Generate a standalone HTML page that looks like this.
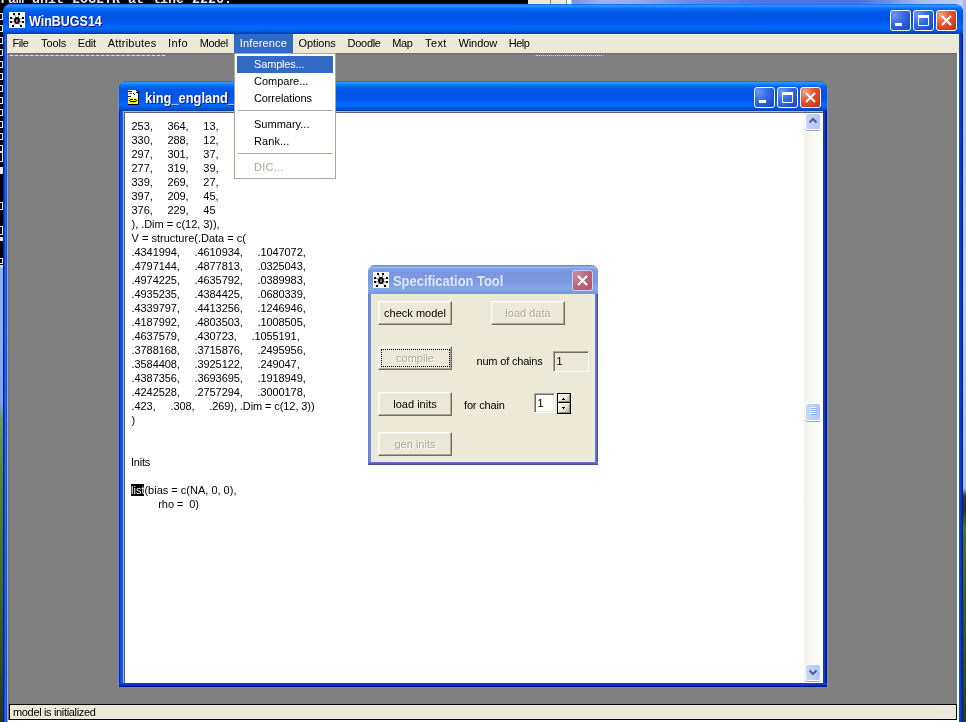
<!DOCTYPE html>
<html lang="en">
<head>
<meta charset="utf-8">
<title>WinBUGS14</title>
<style>
html,body{margin:0;padding:0;}
body{width:966px;height:722px;overflow:hidden;position:relative;background:#808080;font-family:"Liberation Sans",sans-serif;font-size:11px;line-height:14px;color:#000;}
.a{position:absolute;}
.t{position:absolute;white-space:pre;}
#wl{left:0;top:0;width:3px;height:722px;background:linear-gradient(to bottom,#000 0,#000 265px,#d8d4c8 265px,#d8d4c8 268px,#8bb4f0 268px,#8bb4f0 330px,#7aa6ec 400px,#6d9a58 420px,#5a8a2a 470px,#3f6a1c 600px,#22380e 722px);}
#wr{left:963px;top:0;width:3px;height:722px;background:linear-gradient(to bottom,#a8b8e8 0,#b8d0ff 300px,#aabfee 488px,#343c2c 496px,#2a3420 510px,#4a7820 528px,#3c6018 600px,#2a4010 722px);}
#wt{left:0;top:0;width:966px;height:12px;background:linear-gradient(to right,#000 0,#000 528px,#ece9d8 528px,#ece9d8 550px,#8a8878 550px,#8a8878 551px,#ece9d8 551px,#ece9d8 566px,#8a8878 566px,#8a8878 567px,#fff 567px,#fff 571px,#7890e8 572px,#a0b0f0 600px,#98a8ec 640px,#6c88e4 690px,#5078e0 760px,#4a74e0 860px,#7090e4 890px,#a8bcf0 920px,#c0d0f4 966px);}
#ct{left:0;top:-6px;font-family:"Liberation Mono",monospace;font-size:13.33px;line-height:12px;color:#e8e8e8;height:12px;overflow:hidden;font-weight:bold;}
.lm{left:0;width:3px;height:7px;border:1px solid #e8e8e8;border-left:none;box-sizing:border-box;}
/* XP frames */
.fr{border-radius:8px 8px 0 0;overflow:hidden;}
.tba{left:0;top:0;right:0;height:30px;background:linear-gradient(to bottom,#0058ee 0%,#3593ff 4%,#288eff 8%,#127dff 12%,#036ffc 16%,#0262ee 22%,#0057e5 30%,#0054e3 40%,#0055eb 56%,#005bf5 66%,#026afe 76%,#0062ef 86%,#0052d6 92%,#0046c4 97%,#0038a8 100%);}
.tbi{left:0;top:0;right:0;height:29px;background:linear-gradient(to bottom,#6b7fd8 0%,#7e9ee3 4%,#94afe8 6%,#97b4e9 8%,#82a5e4 14%,#7c9fe2 17%,#7996de 25%,#7b99e1 56%,#82a9e9 81%,#80a5e7 89%,#7b96e1 94%,#7a93df 97%,#8a9fe0 100%);}
.ttl{color:#fff;font-weight:bold;font-size:14px;line-height:16px;text-shadow:1px 1px 0 #0a1883;transform-origin:0 0;}
.cb{width:21px;height:21px;box-sizing:border-box;border:1px solid #fff;border-radius:3px;background:radial-gradient(circle at 20% 20%,#6c98f8 0,#3a6cea 40%,#2452d0 75%,#1d47c4 100%);}
.cb.x{background:radial-gradient(circle at 20% 20%,#f0a888 0,#e2592f 40%,#cc3c1c 80%,#b83016 100%);}
.cb.xi{border-color:#ccd2f4;background:radial-gradient(circle at 20% 20%,#cc8c9c 0,#bc647c 50%,#aa546c 100%);}
.cb svg{position:absolute;left:-1px;top:-1px;}
/* menubar */
#mb{left:7px;top:34px;width:952px;height:19px;background:#ece9d8;box-shadow:inset 0 1px 0 #f6f5ee;}
.mi{top:37px;line-height:13px;font-size:11px;}
/* dropdown */
#dd{left:234px;top:53px;width:102px;height:126px;box-sizing:border-box;border:1px solid #aca899;background:#fff;}
.di{left:254px;line-height:13px;font-size:11px;}
/* status */
#sb{left:9px;top:704px;width:948px;height:16px;box-sizing:border-box;border:1px solid #000;background:#ece9d8;}
/* doc */
.doc{left:131.6px;line-height:14px;font-size:11px;}
/* buttons */
.btn{box-sizing:border-box;width:74px;height:24px;background:#ece9d8;border:1px solid;border-color:#fff #716f64 #716f64 #fff;box-shadow:inset -1px -1px 0 #aca899,inset 1px 1px 0 #f4f2e8;text-align:center;line-height:23px;font-size:11px;white-space:pre;}
.dis{color:#aca899;text-shadow:1px 1px 0 #fff;}
.sunk{box-sizing:border-box;border:1px solid;border-color:#aca899 #fff #fff #aca899;box-shadow:inset 1px 1px 0 #716f64,inset -1px -1px 0 #ece9d8;}
</style>
</head>
<body>
<div id="root" class="a" style="left:0;top:0;width:966px;height:722px;will-change:transform">
<div id="wt" class="a"></div><div id="wl" class="a"></div><div id="wr" class="a"></div>
<div id="ct" class="t">ram unit LOGLTR at line 2226:</div>
<div class="a lm" style="top:13px"></div>
<div class="a lm" style="top:25px"></div>
<div class="a lm" style="top:37px"></div>
<div class="a lm" style="top:49px"></div>
<div class="a lm" style="top:61px"></div>
<div class="a lm" style="top:73px"></div>
<div class="a lm" style="top:85px"></div>
<div class="a lm" style="top:97px"></div>
<div class="a lm" style="top:109px"></div>
<div class="a lm" style="top:121px"></div>
<div class="a lm" style="top:133px"></div>
<div class="a lm" style="top:145px"></div>
<div class="a lm" style="top:152px;height:10px;"></div>
<div class="a lm" style="top:167px;height:7px;background:#e8e8e8;"></div>
<div class="a lm" style="top:202px;height:8px;"></div>
<div class="a lm" style="top:226px;height:9px;"></div>
<div class="a lm" style="top:237px;height:4px;background:#e8e8e8;"></div>
<div class="a lm" style="top:258px;height:6px;"></div>
<div class="a fr" style="left:3px;top:4px;width:960px;height:730px;background:linear-gradient(to right,#001ac8 0,#001ac8 1px,#0842e0 1px,#0842e0 2px,#2868f0 2px,#2868f0 3px,#2050b8 3px,#2050b8 4px,#90a8d8 4px,#90a8d8 5px,#6e7480 5px,#6e7480 6px,#808080 6px,#808080 954px,#f4ffff 954px,#f4ffff 956px,#1848c8 956px,#1848c8 957px,#0c3cd0 957px,#0c3cd0 958px,#0630c0 958px,#0630c0 959px,#001c98 959px)"><div class="a tba"></div></div>
<svg class="a" style="left:9px;top:12px" width="16" height="16" viewBox="0 0 16 16"><rect width="16" height="16" fill="#fff"/><path d="M5.5 3L7 6M10 3L9 6M3 6.3L6 7.5M3 10L6 9.3M13 6.3L10 7.5M13 10L10 9.3M4.5 13L6.5 11M11.5 13L9.5 11" fill="none" stroke="#333" stroke-width=".8" opacity=".75"/><g fill="#000" shape-rendering="crispEdges"><rect x="4" y="1" width="2" height="2"/><rect x="9" y="1" width="2" height="2"/><rect x="1" y="5" width="2" height="2"/><rect x="1" y="9" width="2" height="2"/><rect x="13" y="5" width="2" height="2"/><rect x="13" y="9" width="2" height="2"/><rect x="3" y="13" width="2" height="2"/><rect x="11" y="13" width="2" height="2"/></g><ellipse cx="8" cy="8.6" rx="2.9" ry="3.5" fill="#000"/><rect x="7.2" y="7.2" width="1.7" height="3.2" fill="#8a8a8a"/></svg>
<div class="t ttl" style="left:28.5px;top:13px;transform:scaleX(0.8926)" id="t_main">WinBUGS14</div>
<div class="a cb" style="left:890px;top:10px"><svg width="21" height="21" viewBox="0 0 21 21"><rect x="5" y="13" width="7" height="3" fill="#fff"/></svg></div><div class="a cb" style="left:913px;top:10px"><svg width="21" height="21" viewBox="0 0 21 21"><path d="M5.5 6.5h10v9h-10z M5.5 5.5h10" fill="none" stroke="#fff" stroke-width="1"/><rect x="5" y="5" width="11" height="3" fill="#fff"/></svg></div><div class="a cb x" style="left:936px;top:10px"><svg width="21" height="21" viewBox="0 0 21 21"><path d="M6 6L15 15M15 6L6 15" stroke="#fff" stroke-width="2.2" fill="none"/></svg></div>
<div id="mb" class="a"></div>
<div class="a" style="left:234px;top:34px;width:59px;height:19px;background:#316ac5"></div>
<div class="t mi" id="m_File" style="left:12.4px;letter-spacing:-0.378px;">File</div>
<div class="t mi" id="m_Tools" style="left:41.1px;letter-spacing:-0.147px;">Tools</div>
<div class="t mi" id="m_Edit" style="left:77.8px;letter-spacing:-0.256px;">Edit</div>
<div class="t mi" id="m_Attributes" style="left:107.7px;letter-spacing:0.226px;">Attributes</div>
<div class="t mi" id="m_Info" style="left:167.9px;letter-spacing:0.447px;">Info</div>
<div class="t mi" id="m_Model" style="left:199.7px;letter-spacing:-0.342px;">Model</div>
<div class="t mi" id="m_Inference" style="left:239.7px;color:#fff;letter-spacing:0.153px;">Inference</div>
<div class="t mi" id="m_Options" style="left:298.6px;letter-spacing:-0.120px;">Options</div>
<div class="t mi" id="m_Doodle" style="left:347.6px;letter-spacing:-0.292px;">Doodle</div>
<div class="t mi" id="m_Map" style="left:392.3px;letter-spacing:-0.353px;">Map</div>
<div class="t mi" id="m_Text" style="left:425.0px;letter-spacing:0.404px;">Text</div>
<div class="t mi" id="m_Window" style="left:458.5px;letter-spacing:-0.105px;">Window</div>
<div class="t mi" id="m_Help" style="left:508.7px;letter-spacing:-0.475px;">Help</div>
<div class="a" style="left:8px;top:53px;width:949px;height:1px;background:#6c6e74"></div>
<div class="a" style="left:9px;top:54px;width:948px;height:1px;background:#7a7a7c"></div>
<div class="a" style="left:9px;top:55px;width:157px;height:1px;background:#9696b0"></div><div class="a" style="left:10px;top:55px;width:155px;height:0;border-top:1px dashed #e4e4f0"></div>
<div class="a" style="left:534px;top:55px;width:70px;height:1px;background:#8c8ca4"></div><div class="a" style="left:536px;top:55px;width:66px;height:0;border-top:1px dotted #d0d0e0"></div>
<div class="a" style="left:118px;top:88px;width:1px;height:599px;background:#8088c0"></div>
<div class="a fr" style="left:119px;top:81px;width:708px;height:606px;background:linear-gradient(to right,#0020c0 0,#0020c0 1px,#1050e0 1px,#1050e0 3px,#2060e0 3px,#2060e0 4px,#0c3cc8 4px,#0c3cc8 704px,#1038c0 704px,#1038c0 706px,#0428b0 706px,#001680 708px)"><div class="a tba"></div></div>
<div class="a" style="left:119px;top:683px;width:708px;height:4px;background:linear-gradient(to bottom,#0c40d8 0,#0c40d8 1px,#0a38c8 1px,#0a38c8 2px,#0428b0 2px,#0428b0 3px,#001680 3px)"></div>
<div class="a" style="left:827px;top:88px;width:1px;height:599px;background:#8088b8"></div>
<div class="a" style="left:123px;top:111px;width:700px;height:572px;background:#fff;box-sizing:border-box;border-left:1px solid #90b0f0;border-top:1px solid #a0bcf0;box-shadow:inset 1px 1px 0 #5a6478"></div>
<div class="a" style="left:804px;top:113px;width:17px;height:569px;background:linear-gradient(to right,#f3f1ec 0,#f8f7f3 40%,#fefefd 100%)"></div>
<div class="a" style="left:805px;top:113px;width:16px;height:17px;box-sizing:border-box;border:1px solid #fff;border-radius:3px;background:linear-gradient(to right,#c9d7fc,#bccdfa 60%,#b0c4f6);box-shadow:0 1px 0 #9aa8c8"><svg class="a" style="left:-1px;top:-1px" width="16" height="17" viewBox="0 0 16 17"><path d="M4.5 9.5L8 6L11.5 9.5" fill="none" stroke="#4d6185" stroke-width="2"/></svg></div><div class="a" style="left:805px;top:403px;width:16px;height:18px;box-sizing:border-box;border:1px solid #fff;border-radius:3px;background:linear-gradient(to right,#c9d7fc,#bccdfa 60%,#b0c4f6);box-shadow:0 1px 0 #9aa8c8"><svg class="a" style="left:-1px;top:-1px" width="16" height="18" viewBox="0 0 16 18"><g stroke="#eef4fe" stroke-width="1"><path d="M5 4.5h6M5 6.5h6M5 8.5h6M5 10.5h6"/></g><g stroke="#8cb0f8" stroke-width="1"><path d="M6 5.5h6M6 7.5h6M6 9.5h6M6 11.5h6"/></g></svg></div><div class="a" style="left:805px;top:664px;width:16px;height:17px;box-sizing:border-box;border:1px solid #fff;border-radius:3px;background:linear-gradient(to right,#c9d7fc,#bccdfa 60%,#b0c4f6);box-shadow:0 1px 0 #9aa8c8"><svg class="a" style="left:-1px;top:-1px" width="16" height="17" viewBox="0 0 16 17"><path d="M4.5 6.5L8 10L11.5 6.5" fill="none" stroke="#4d6185" stroke-width="2"/></svg></div>
<svg class="a" style="left:127px;top:89px" width="13" height="17" viewBox="0 0 13 17" shape-rendering="crispEdges"><path d="M1 1h8l3 3v12h-11z" fill="#000"/><path d="M1 1h8v3h2v5h-10z" fill="#fff"/><rect x="1" y="9" width="10" height="6" fill="#f4f040"/><rect x="1" y="2" width="4" height="1" fill="#000"/><rect x="2" y="4" width="3" height="1" fill="#e04040"/><rect x="1" y="7" width="3" height="1" fill="#000"/><rect x="6" y="4" width="1" height="1" fill="#000"/><rect x="7" y="5" width="1" height="1" fill="#000"/><rect x="9" y="2" width="1" height="1" fill="#fff"/><path d="M3 10h3v1h-3zM7 10h2v1h-2zM2 11h1v1h-1zM9 11h1v1h-1zM3 12h6v1h-6z" fill="#000"/></svg>
<div class="t ttl" style="left:144.8px;top:90px;transform:scaleX(0.9180)" id="t_child">king_england_</div>
<div class="a cb" style="left:754px;top:87px"><svg width="21" height="21" viewBox="0 0 21 21"><rect x="5" y="13" width="7" height="3" fill="#fff"/></svg></div><div class="a cb" style="left:777px;top:87px"><svg width="21" height="21" viewBox="0 0 21 21"><path d="M5.5 6.5h10v9h-10z M5.5 5.5h10" fill="none" stroke="#fff" stroke-width="1"/><rect x="5" y="5" width="11" height="3" fill="#fff"/></svg></div><div class="a cb x" style="left:800px;top:87px"><svg width="21" height="21" viewBox="0 0 21 21"><path d="M6 6L15 15M15 6L6 15" stroke="#fff" stroke-width="2.2" fill="none"/></svg></div>
<div class="t doc" id="d0" style="top:119px;letter-spacing:-0.090px;">253,     364,     13,</div>
<div class="t doc" id="d1" style="top:133px;letter-spacing:-0.090px;">330,     288,     12,</div>
<div class="t doc" id="d2" style="top:147px;letter-spacing:-0.090px;">297,     301,     37,</div>
<div class="t doc" id="d3" style="top:161px;letter-spacing:-0.090px;">277,     319,     39,</div>
<div class="t doc" id="d4" style="top:175px;letter-spacing:-0.090px;">339,     269,     27,</div>
<div class="t doc" id="d5" style="top:189px;letter-spacing:-0.090px;">397,     209,     45,</div>
<div class="t doc" id="d6" style="top:203px;letter-spacing:-0.090px;">376,     229,     45</div>
<div class="t doc" id="d7" style="top:217px;letter-spacing:-0.050px;">), .Dim = c(12, 3)),</div>
<div class="t doc" id="d8" style="top:231px;letter-spacing:0.000px;">V = structure(.Data = c(</div>
<div class="t doc" id="d9" style="top:245px;letter-spacing:-0.090px;">.4341994,     .4610934,     .1047072,</div>
<div class="t doc" id="d10" style="top:259px;letter-spacing:-0.090px;">.4797144,     .4877813,     .0325043,</div>
<div class="t doc" id="d11" style="top:273px;letter-spacing:-0.090px;">.4974225,     .4635792,     .0389983,</div>
<div class="t doc" id="d12" style="top:287px;letter-spacing:-0.090px;">.4935235,     .4384425,     .0680339,</div>
<div class="t doc" id="d13" style="top:301px;letter-spacing:-0.090px;">.4339797,     .4413256,     .1246946,</div>
<div class="t doc" id="d14" style="top:315px;letter-spacing:-0.090px;">.4187992,     .4803503,     .1008505,</div>
<div class="t doc" id="d15" style="top:329px;letter-spacing:-0.090px;">.4637579,     .430723,     .1055191,</div>
<div class="t doc" id="d16" style="top:343px;letter-spacing:-0.090px;">.3788168,     .3715876,     .2495956,</div>
<div class="t doc" id="d17" style="top:357px;letter-spacing:-0.090px;">.3584408,     .3925122,     .249047,</div>
<div class="t doc" id="d18" style="top:371px;letter-spacing:-0.090px;">.4387356,     .3693695,     .1918949,</div>
<div class="t doc" id="d19" style="top:385px;letter-spacing:-0.090px;">.4242528,     .2757294,     .3000178,</div>
<div class="t doc" id="d20" style="top:399px;letter-spacing:-0.090px;">.423,     .308,     .269), .Dim = c(12, 3))</div>
<div class="t doc" id="d21" style="top:413px;letter-spacing:-0.090px;">)</div>
<div class="t doc" id="d24" style="left:131px;top:455px;letter-spacing:-0.200px;">Inits</div>
<div class="t doc" id="d26" style="left:131px;top:483px;letter-spacing:0.000px;"><span style="background:#000;color:#fff">list</span>(bias = c(NA, 0, 0),</div>
<div class="t doc" id="d27" style="top:497px;letter-spacing:-0.090px;">         rho =  0)</div>
<div id="dd" class="a"></div>
<div class="a" style="left:237px;top:56px;width:96px;height:17px;background:#316ac5"></div>
<div class="t di" id="dd_Samples" style="top:58px;color:#fff;letter-spacing:-0.163px;">Samples...</div>
<div class="t di" id="dd_Compare" style="top:75px;letter-spacing:-0.002px;">Compare...</div>
<div class="t di" id="dd_Correlations" style="top:92px;letter-spacing:-0.119px;">Correlations</div>
<div class="t di" id="dd_Summary" style="top:118px;letter-spacing:0.009px;">Summary...</div>
<div class="t di" id="dd_Rank" style="top:135px;letter-spacing:0.073px;">Rank...</div>
<div class="t di" id="dd_DIC" style="top:161px;color:#aca899;letter-spacing:0.235px;">DIC...</div>
<div class="a" style="left:238px;top:110px;width:94px;height:1px;background:#aca899"></div>
<div class="a" style="left:238px;top:153px;width:94px;height:1px;background:#aca899"></div>
<div class="a fr" style="left:368px;top:265px;width:230px;height:200px;border-radius:7px 7px 0 0;background:linear-gradient(to right,#6a7cd6 0,#6a7cd6 1px,#7488dc 1px,#7488dc 227px,#7078c8 227px,#7078c8 228px,#6068c0 228px,#6068c0 229px,#4850a8 229px)"><div class="a" style="left:0;top:197px;width:230px;height:3px;background:linear-gradient(to bottom,#6870c8 0,#6870c8 1px,#5860b8 1px,#5860b8 2px,#4850a0 2px)"></div><div class="a tbi"></div><div class="a" style="left:3px;top:29px;width:224px;height:168px;background:#ece9d8"></div></div>
<svg class="a" style="left:373px;top:272px" width="16" height="16" viewBox="0 0 16 16"><rect width="16" height="16" fill="#fff"/><path d="M5.5 3L7 6M10 3L9 6M3 6.3L6 7.5M3 10L6 9.3M13 6.3L10 7.5M13 10L10 9.3M4.5 13L6.5 11M11.5 13L9.5 11" fill="none" stroke="#333" stroke-width=".8" opacity=".75"/><g fill="#000" shape-rendering="crispEdges"><rect x="4" y="1" width="2" height="2"/><rect x="9" y="1" width="2" height="2"/><rect x="1" y="5" width="2" height="2"/><rect x="1" y="9" width="2" height="2"/><rect x="13" y="5" width="2" height="2"/><rect x="13" y="9" width="2" height="2"/><rect x="3" y="13" width="2" height="2"/><rect x="11" y="13" width="2" height="2"/></g><ellipse cx="8" cy="8.6" rx="2.9" ry="3.5" fill="#000"/><rect x="7.2" y="7.2" width="1.7" height="3.2" fill="#8a8a8a"/></svg>
<div class="t ttl" id="t_spec" style="left:392.5px;top:273px;color:#dde6fa;text-shadow:none;transform:scaleX(0.9230)">Specification Tool</div>
<div class="a cb xi" style="left:572px;top:270px"><svg width="21" height="21" viewBox="0 0 21 21"><path d="M6 6L15 15M15 6L6 15" stroke="#fff" stroke-width="2.2" fill="none"/></svg></div>
<div class="a btn" style="left:378px;top:301px">check model</div>
<div class="a btn dis" style="left:491px;top:301px">load data</div>
<div class="a btn dis" style="left:378px;top:346px">compile</div>
<div class="a" style="left:381px;top:349px;width:69px;height:18px;box-sizing:border-box;border:1px dotted #000"></div>
<div class="a btn" style="left:378px;top:392px">load inits</div>
<div class="a btn dis" style="left:378px;top:432px">gen inits</div>
<div class="t" id="l_num" style="left:476.5px;top:354px;letter-spacing:-0.182px;">num of chains</div>
<div class="t" id="l_for" style="left:464px;top:398px;letter-spacing:-0.175px;">for chain</div>
<div class="a sunk" style="left:553px;top:351px;width:36px;height:21px;background:#ece9d8"></div><div class="t" style="left:556.3px;top:354px;font-size:11.5px">1</div>
<div class="a sunk" style="left:534px;top:393px;width:21px;height:20px;background:#fff"></div><div class="t" style="left:537.3px;top:396px;font-size:11.5px">1</div>
<div class="a" style="left:557px;top:393px;width:14px;height:21px;background:#000"></div>
<div class="a" style="left:558px;top:394px;width:12px;height:8px;box-sizing:border-box;background:linear-gradient(135deg,#fbfaf5,#e4e0d0 60%,#c4c0b0);border:1px solid;border-color:#fff #8c8878 #8c8878 #fff"></div>
<div class="a" style="left:558px;top:403px;width:12px;height:10px;box-sizing:border-box;background:linear-gradient(135deg,#fbfaf5,#e4e0d0 60%,#b8b4a4);border:1px solid;border-color:#fff #8c8878 #8c8878 #fff"></div>
<svg class="a" style="left:558px;top:394px" width="12" height="19" viewBox="0 0 12 19" shape-rendering="crispEdges"><path d="M5 4h1v1h1v1h-3v-1h1z M4 13h3v1h-1v1h-1v-1h-1z" fill="#000"/></svg>
<div id="sb" class="a"></div><div class="a" style="left:8px;top:720px;width:949px;height:2px;background:#fff"></div>
<div class="t" id="st" style="left:13px;top:705.5px;line-height:13px;letter-spacing:-0.340px;">model is initialized</div>
</div>
</body>
</html>
